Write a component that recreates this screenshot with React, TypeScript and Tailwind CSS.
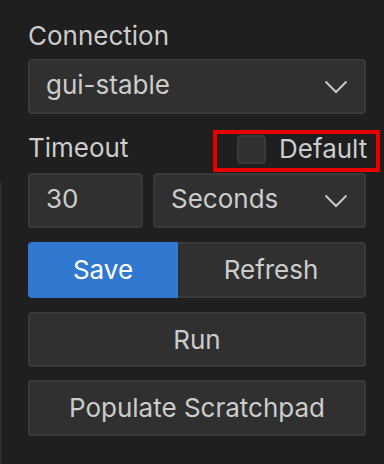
const font = { fontFamily: 'Inter, "Noto Sans", sans-serif' };

function Chevron() {
  return (
    <svg width="24" height="14" viewBox="0 0 24 14" fill="none" className="shrink-0">
      <path d="M1.5 1.5 L12 12 L22.5 1.5" stroke="#c8c8c8" strokeWidth="2" />
    </svg>
  );
}

export default function App() {
  return (
    <div
      className="relative w-[384px] h-[464px] bg-[#1f1f1f] text-[#cccccc] text-[26px] leading-[32px] pl-[28px] pr-[18px] pt-[20px]"
      style={font}
    >
      {/* edge of the neighbouring panel */}
      <div className="absolute left-0 top-[183px] bottom-0 w-[2px] bg-[#2c2c2c]" />

      <div>Connection</div>
      <div className="mt-[7px] h-[55px] flex items-center justify-between pl-[16px] pr-[16px] bg-[#303030] border-2 border-[#3a3a3a] rounded-[4px]">
        <span className="-mt-[4px]">gui-stable</span>
        <Chevron />
      </div>

      <div className="mt-[16px] h-[42px] flex items-center justify-between">
        <span className="mb-[6px]">Timeout</span>
        <div className="-mr-[14px] w-[167px] h-[42px] border-4 border-[#e60000] flex items-center gap-[13px] pl-[20px] pb-[4px]">
          <div className="w-[29px] h-[29px] rounded-[4px] bg-[#303030] border-2 border-[#3a3a3a]" />
          <span>Default</span>
        </div>
      </div>

      <div className="mt-[1px] flex gap-[10px]">
        <div className="w-[115px] h-[55px] flex items-center pl-[16px] bg-[#303030] border-2 border-[#3a3a3a] rounded-[4px]">
          <span className="-mt-[4px]">30</span>
        </div>
        <div className="flex-1 h-[55px] flex items-center justify-between pl-[16px] pr-[16px] bg-[#303030] border-2 border-[#3a3a3a] rounded-[4px]">
          <span className="-mt-[4px]">Seconds</span>
          <Chevron />
        </div>
      </div>

      <div className="mt-[14px] h-[56px] flex rounded-[4px] overflow-hidden">
        <button className="w-[150px] h-full bg-[#3178d0] text-white">Save</button>
        <button className="flex-1 h-full bg-[#303030] border-2 border-l-0 border-[#3a3a3a] rounded-r-[4px]">
          Refresh
        </button>
      </div>

      <button className="mt-[14px] w-full h-[55px] bg-[#303030] border-2 border-[#3a3a3a] rounded-[4px] block">
        Run
      </button>

      <button className="mt-[13px] w-full h-[56px] bg-[#303030] border-2 border-[#3a3a3a] rounded-[4px] block">
        Populate Scratchpad
      </button>
    </div>
  );
}
